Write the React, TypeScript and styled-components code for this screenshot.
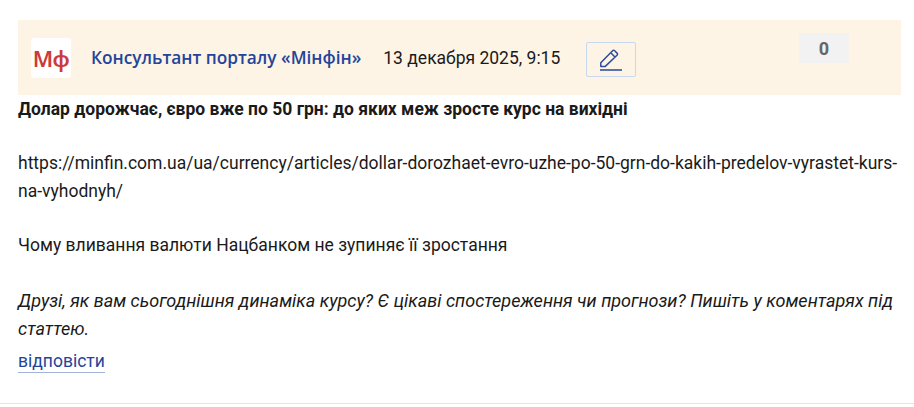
import React from 'react';
import styled, { createGlobalStyle } from 'styled-components';

const GlobalStyle = createGlobalStyle`
	html, body {
		margin: 0;
		padding: 0;
		background: #fff;
	}
	body {
		font-family: Roboto, 'Liberation Sans', sans-serif;
		color: #1a1a1a;
	}
`;

function EditIcon() {
	return (
		<svg width='24' height='24' viewBox='0 0 24 24' fill='none'>
			<path
				d='M1.8 18.6V14.8L13.6 2.8C14.3 2.1 15 2.1 15.7 2.8L18 5.1C18.7 5.8 18.7 6.5 18 7.2L6 18.6H1.8ZM11.8 4.8L15.9 9'
				stroke='#2d4c9c'
				strokeWidth='1.5'
				strokeLinejoin='round'
			/>
			<rect x='1' y='21' width='22' height='2' fill='#5a72b0' />
		</svg>
	);
}

function App() {
	return (
		<>
			<GlobalStyle />
			<Wrapper>
				<Post>
					<Header>
						<Logo>Мф</Logo>
						<Author>Консультант порталу «Мінфін»</Author>
						<PostDate>13 декабря 2025, 9:15</PostDate>
						<EditButton>
							<EditIcon />
						</EditButton>
						<Rating>0</Rating>
					</Header>
					<Body>
						<Paragraph $bold>Долар дорожчає, євро вже по 50 грн: до яких меж зросте курс на вихідні</Paragraph>
						<Spacer />
						<Paragraph>
							https://minfin.com.ua/ua/currency/articles/dollar-dorozhaet-evro-uzhe-po-50-grn-do-kakih-predelov-vyrastet-kurs-na-vyhodnyh/
						</Paragraph>
						<Spacer />
						<Paragraph>Чому вливання валюти Нацбанком не зупиняє її зростання</Paragraph>
						<Spacer $tall />
						<Paragraph $italic>
							Друзі, як вам сьогоднішня динаміка курсу? Є цікаві спостереження чи прогнози? Пишіть у коментарях під статтею.
						</Paragraph>
					</Body>
					<ReplyLink>відповісти</ReplyLink>
				</Post>
			</Wrapper>
		</>
	);
}

const Wrapper = styled('div')`
	width: 914px;
	height: 407px;
	overflow: hidden;
	box-sizing: border-box;
	padding-top: 20px;
`;

const Post = styled('article')`
	height: 384px;
	box-sizing: border-box;
	display: flex;
	flex-direction: column;
	align-items: flex-start;
	padding: 0 13px 0 18px;
	border-bottom: 1px solid #e5e5e5;
`;

const Header = styled('header')`
	position: relative;
	align-self: stretch;
	flex: none;
	height: 75px;
	background: #fdf4e5;
	display: flex;
	align-items: center;
	padding-left: 13px;
	box-sizing: border-box;
`;

const Logo = styled('div')`
	width: 40px;
	height: 40px;
	border-radius: 3px;
	background: #fff;
	color: #cc3a3a;
	font-family: 'Noto Sans', sans-serif;
	font-size: 22px;
	font-weight: 600;
	letter-spacing: -0.5px;
	display: flex;
	align-items: center;
	justify-content: center;
`;

const Author = styled('span')`
	margin-left: 20px;
	color: #24449a;
	font-family: 'Open Sans', sans-serif;
	font-size: 17.25px;
	font-weight: 600;
`;

const PostDate = styled('span')`
	margin-left: 22px;
	font-size: 17.5px;
	color: #1a1a1a;
`;

const EditButton = styled('button')`
	margin-left: 26px;
	margin-top: 4px;
	width: 50px;
	height: 35px;
	background: transparent;
	border: 1px solid #c8d8f0;
	border-radius: 2px;
	display: flex;
	align-items: center;
	justify-content: center;
	padding: 0;
`;

const Rating = styled('div')`
	position: absolute;
	right: 52px;
	top: 13px;
	width: 50px;
	height: 30px;
	border-radius: 3px;
	background: #f2f2f2;
	color: #666;
	font-size: 18px;
	font-weight: 700;
	display: flex;
	align-items: center;
	justify-content: center;
`;

const Body = styled('div')`
	width: 881px;
	font-size: 17.5px;
	line-height: 28px;
`;

const Paragraph = styled('div')<{ $bold?: boolean; $italic?: boolean }>`
	font-weight: ${(p) => (p.$bold ? 700 : 400)};
	font-style: ${(p) => (p.$italic ? 'italic' : 'normal')};
	font-size: ${(p) => (p.$italic ? '18.05px' : 'inherit')};
`;

const Spacer = styled('div')<{ $tall?: boolean }>`
	height: ${(p) => (p.$tall ? '28px' : '26px')};
`;

const ReplyLink = styled('a')`
	margin-top: 7px;
	color: #24449a;
	font-size: 17.5px;
	line-height: 22px;
	border-bottom: 1px solid #a3b3da;
`;

export default App;
